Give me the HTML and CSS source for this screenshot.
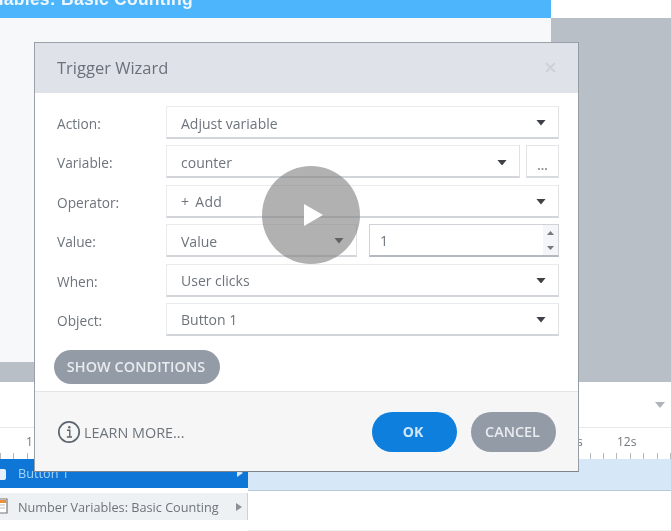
FILE: index.html
```html
<!DOCTYPE html>
<html lang="en">
<head>
<meta charset="utf-8">
<title>Trigger Wizard</title>
<link rel="stylesheet" href="styles.css">
</head>
<body>
<div class="app">
  <div class="titlebar"><span class="titlebar-text">Number Variables: Basic Counting</span></div>
  <div class="workspace">
    <div class="stage"></div>
    <div class="stage-foot"></div>
  </div>
  <div class="toolbar"><svg class="toolbar-arrow" width="10" height="6" viewBox="0 0 10 6"><path d="M0 0h10L5 6z"/></svg></div>
  <div class="ruler">
    <span class="ruler-one">1</span>
    <span class="ruler-s">s</span>
    <span class="ruler-twelve">12s</span>
    <div class="ticks"></div>
  </div>
  <div class="timeline-row row-active">
    <div class="row-label">
      <span class="row-icon-white"></span>
      <span class="row-name">Button 1</span>
      <svg class="row-caret" width="6" height="8" viewBox="0 0 6 8"><path d="M0 0l6 4-6 4z"/></svg>
    </div>
    <div class="row-track"></div>
  </div>
  <div class="timeline-row row-slide">
    <div class="row-label">
      <svg class="row-icon-slide" width="8" height="16" viewBox="0 0 8 16"><path d="M-4 1h11v14H-4z" fill="#fff" stroke="#777" stroke-width="1.2"/><path d="M-3 2h9v3H-3z" fill="#e8913c"/><path d="M-2 7h7M-2 10h7" stroke="#bbb"/></svg>
      <span class="row-name">Number Variables: Basic Counting</span>
      <svg class="row-caret" width="6" height="8" viewBox="0 0 6 8"><path d="M0 0l6 4-6 4z"/></svg>
    </div>
    <div class="row-track"></div>
  </div>
</div>

<div class="dialog">
  <div class="dialog-head">
    <span class="dialog-title">Trigger Wizard</span>
    <svg class="dialog-close" width="11" height="11" viewBox="0 0 11 11"><path d="M1 1l9 9M10 1l-9 9"/></svg>
  </div>
  <div class="dialog-body">
    <div class="form">
      <label class="form-label">Action:</label>
      <div class="field"><span>Adjust variable</span><svg class="caret" width="10" height="6" viewBox="0 0 10 6"><path d="M0 0h10L5 6z"/></svg></div>

      <label class="form-label">Variable:</label>
      <div class="field-group">
        <div class="field field-grow"><span>counter</span><svg class="caret" width="10" height="6" viewBox="0 0 10 6"><path d="M0 0h10L5 6z"/></svg></div>
        <div class="more-btn">...</div>
      </div>

      <label class="form-label">Operator:</label>
      <div class="field"><span class="wide-word">+ Add</span><svg class="caret" width="10" height="6" viewBox="0 0 10 6"><path d="M0 0h10L5 6z"/></svg></div>

      <label class="form-label">Value:</label>
      <div class="field-group value-group">
        <div class="field field-value"><span>Value</span><svg class="caret" width="10" height="6" viewBox="0 0 10 6"><path d="M0 0h10L5 6z"/></svg></div>
        <div class="spin">
          <span class="spin-value">1</span>
          <div class="spin-btns">
            <svg width="7" height="4" viewBox="0 0 7 4"><path d="M0 4h7L3.5 0z"/></svg>
            <svg width="7" height="4" viewBox="0 0 7 4"><path d="M0 0h7L3.5 4z"/></svg>
          </div>
        </div>
      </div>

      <label class="form-label">When:</label>
      <div class="field"><span>User clicks</span><svg class="caret" width="10" height="6" viewBox="0 0 10 6"><path d="M0 0h10L5 6z"/></svg></div>

      <label class="form-label">Object:</label>
      <div class="field"><span>Button 1</span><svg class="caret" width="10" height="6" viewBox="0 0 10 6"><path d="M0 0h10L5 6z"/></svg></div>
    </div>
    <button class="pill pill-conditions" type="button">SHOW CONDITIONS</button>
  </div>
  <div class="dialog-foot">
    <div class="learn">
      <svg width="24" height="24" viewBox="0 0 24 24"><circle cx="12" cy="12" r="10.2" fill="none" stroke="#5d6670" stroke-width="1.7"/><path d="M10 10.2h2.8v6.6M9.8 17h5.2" fill="none" stroke="#5d6670" stroke-width="1.4"/><circle cx="12.3" cy="7.2" r="1.2" fill="#5d6670"/></svg>
      <span>LEARN MORE...</span>
    </div>
    <div class="foot-actions">
      <button class="pill pill-ok" type="button">OK</button>
      <button class="pill pill-cancel" type="button">CANCEL</button>
    </div>
  </div>
</div>

<div class="play"><svg width="20" height="22" viewBox="0 0 20 22"><path d="M1 0l19 11L1 22z"/></svg></div>
</body>
</html>
```

FILE: styles.css
```css
* { box-sizing: border-box; }
html, body { margin: 0; padding: 0; }
html { overflow: hidden; background: #fff; }
body {
  width: 671px;
  height: 531px;
  overflow: hidden;
  position: relative;
  background: #fff;
  font-family: "Open Sans", "Noto Sans", sans-serif;
  color: #6a7178;
  filter: blur(0.4px);
}
.app { display: flex; flex-direction: column; height: 531px; }

.titlebar {
  height: 18px;
  width: 551px;
  background: #4db5fb;
  overflow: hidden;
  flex: none;
}
.titlebar-text {
  display: block;
  margin: -13px 0 0 -102px;
  font-family: "Liberation Sans", sans-serif;
  font-weight: 700;
  font-size: 17.5px;
  line-height: 24px;
  letter-spacing: 0.25px;
  color: #eef7fe;
  white-space: nowrap;
}

.workspace {
  height: 364px;
  flex: none;
  background: #b8bfc7;
  display: flex;
  flex-direction: column;
}
.stage { width: 551px; height: 344px; background: #f6f8fa; }
.stage-foot { height: 20px; }

.toolbar {
  height: 46px;
  flex: none;
  background: #fff;
  display: flex;
  justify-content: flex-end;
  align-items: center;
  padding-right: 6px;
  border-bottom: 1px solid #e6e8ea;
}
.toolbar-arrow { fill: #aeb4ba; margin-top: 1px; }

.ruler {
  height: 31px;
  flex: none;
  position: relative;
  background: #fff;
  font-size: 12px;
  color: #70777e;
}
.ruler-one { position: absolute; left: 26px; top: 5px; }
.ruler-s { position: absolute; left: 577px; top: 5px; }
.ruler-twelve { position: absolute; left: 617px; top: 5px; }
.ticks {
  position: absolute;
  left: 0;
  right: 0;
  bottom: 0;
  height: 6px;
  background: repeating-linear-gradient(90deg, #b4bac0 0 1px, transparent 1px 13.4px);
}

.timeline-row { display: flex; flex: none; }
.row-label {
  width: 248px;
  flex: none;
  display: flex;
  align-items: center;
  font-size: 12.7px;
  padding-left: 18px;
  position: relative;
}
.row-name { flex: 1; white-space: nowrap; }
.row-caret { margin-right: 5px; }
.row-track { flex: 1; }

.row-active { height: 32px; }
.row-active .row-label { background: #0d76d6; color: #a8d4f8; height: 29px; padding-bottom: 1px; }
.row-active .row-caret { fill: #d5e9fb; }
.row-active .row-track { background: #d6e8f8; border-bottom: 1px solid #b4c8dc; }
.row-icon-white {
  position: absolute;
  left: 0;
  top: 10px;
  width: 6px;
  height: 11px;
  background: #e6f1fb;
  border-radius: 0 2px 2px 0;
}

.row-slide { height: 40px; }
.row-slide .row-label {
  background: #eef1f4;
  height: 27px;
  margin-top: 2px;
  border-right: 1px solid #ccd1d6;
  color: #6d747b;
}
.row-slide .row-caret { fill: #8b9197; }
.row-icon-slide { position: absolute; left: 0; top: 5px; }
.row-slide .row-track { border-bottom: 1px solid #eef0f2; }

.dialog {
  position: absolute;
  left: 34px;
  top: 42px;
  width: 545px;
  height: 430px;
  background: #fff;
  border: 1px solid #9ba1a8;
  border-bottom-color: #7d8389;
  border-right-color: #969ca3;
  display: flex;
  flex-direction: column;
}
.dialog-head {
  height: 50px;
  flex: none;
  background: #dfe3e9;
  display: flex;
  align-items: center;
  justify-content: space-between;
  padding: 0 22px 2px 22px;
}
.dialog-title { font-size: 16.5px; color: #6a7178; }
.dialog-close { stroke: #ccd1d6; stroke-width: 1.8; }

.dialog-body {
  height: 299px;
  flex: none;
  padding: 13px 19px 0 22px;
  border-bottom: 1px solid #e2e4e6;
}
.form {
  display: grid;
  grid-template-columns: 109px 1fr;
  grid-auto-rows: 33px;
  row-gap: 6.4px;
  align-items: center;
}
.form-label { font-size: 13.7px; color: #6d747b; padding-top: 2px; }

.field {
  height: 33px;
  background: #fff;
  border: 1px solid #e9ebed;
  border-bottom: 2px solid #d2d6da;
  border-right-color: #dfe2e5;
  display: flex;
  align-items: center;
  justify-content: space-between;
  padding: 2px 12px 0 14px;
  font-size: 14px;
  color: #6d747b;
}
.wide-word { word-spacing: 2px; letter-spacing: 0.3px; }
.caret { fill: #3e4246; flex: none; width: 10px; height: 5.5px; }

.field-group { display: flex; height: 33px; }
.field-grow { flex: 1; }
.more-btn {
  width: 33px;
  margin-left: 6px;
  background: #fff;
  border: 1px solid #e2e4e7;
  border-bottom: 2px solid #d8dbde;
  font-size: 12px;
  font-weight: 700;
  color: #8a9096;
  text-align: center;
  line-height: 40px;
}
.value-group { gap: 12px; }
.field-value { width: 191px; flex: none; }
.spin {
  flex: 1;
  border: 1px solid #cfd3d7;
  border-bottom: 2px solid #b3b9bf;
  display: flex;
  justify-content: space-between;
  align-items: center;
  font-size: 14px;
  color: #6d747b;
  padding-left: 10px;
}
.spin-btns {
  width: 15px;
  height: 100%;
  background: #f3f5f7;
  display: flex;
  flex-direction: column;
  align-items: center;
  justify-content: space-around;
  fill: #73797f;
}

.pill {
  border: 0;
  border-radius: 20px;
  font-family: inherit;
  color: #e9ecef;
  padding: 0;
}
.pill-conditions {
  display: block;
  width: 166px;
  height: 34px;
  margin-top: 14px;
  margin-left: -3px;
  padding-right: 2px;
  background: #939ba6;
  font-size: 14.4px;
  font-weight: 600;
  letter-spacing: 0.1px;
}

.dialog-foot {
  flex: 1;
  background: #f6f6f7;
  display: flex;
  align-items: center;
  justify-content: space-between;
  padding: 1px 22px 0 22px;
}
.learn {
  display: flex;
  align-items: center;
  gap: 3px;
  font-size: 14.4px;
  color: #6d747b;
}
.foot-actions { display: flex; gap: 14px; margin-top: -1px; }
.pill-ok, .pill-cancel { width: 85px; height: 40px; font-size: 14px; }
.pill-ok { background: #0f7fde; color: #cfe8fb; font-weight: 700; padding-right: 3px; }
.pill-cancel { background: #939ba6; font-weight: 600; font-size: 14.4px; padding-right: 2px; }

.play {
  position: absolute;
  left: 262px;
  top: 166px;
  width: 98px;
  height: 98px;
  border-radius: 50%;
  background: rgba(120, 120, 120, 0.58);
  display: flex;
  align-items: center;
  justify-content: center;
  fill: #fff;
  padding-left: 4px;
}
```
